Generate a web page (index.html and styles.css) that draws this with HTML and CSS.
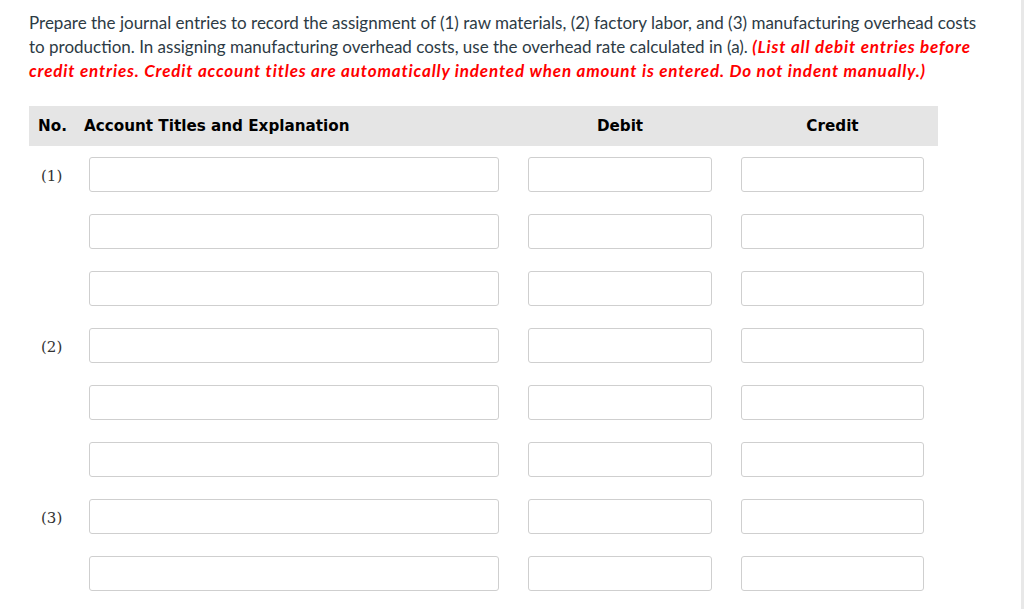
FILE: index.html
```html
<!DOCTYPE html>
<html lang="en">
<head>
<meta charset="utf-8">
<title>Journal entries</title>
<link rel="stylesheet" href="styles.css">
</head>
<body>
<div class="page">
  <p class="prompt">Prepare the journal entries to record the assignment of (1) raw materials, (2) factory labor, and (3) manufacturing overhead costs to production. In assigning manufacturing overhead costs, use the overhead rate calculated in (a). <em class="note">(List all debit entries before credit entries. Credit account titles are automatically indented when amount is entered. Do not indent manually.)</em></p>

  <div class="journal">
    <div class="row head">
      <div class="th th-no">No.</div>
      <div class="th th-account">Account Titles and Explanation</div>
      <div class="th th-amt">Debit</div>
      <div class="th th-amt">Credit</div>
    </div>

    <div class="row">
      <div class="no">(1)</div>
      <input class="field" type="text">
      <input class="field" type="text">
      <input class="field" type="text">
    </div>
    <div class="row">
      <div class="no"></div>
      <input class="field" type="text">
      <input class="field" type="text">
      <input class="field" type="text">
    </div>
    <div class="row">
      <div class="no"></div>
      <input class="field" type="text">
      <input class="field" type="text">
      <input class="field" type="text">
    </div>
    <div class="row">
      <div class="no">(2)</div>
      <input class="field" type="text">
      <input class="field" type="text">
      <input class="field" type="text">
    </div>
    <div class="row">
      <div class="no"></div>
      <input class="field" type="text">
      <input class="field" type="text">
      <input class="field" type="text">
    </div>
    <div class="row">
      <div class="no"></div>
      <input class="field" type="text">
      <input class="field" type="text">
      <input class="field" type="text">
    </div>
    <div class="row">
      <div class="no">(3)</div>
      <input class="field" type="text">
      <input class="field" type="text">
      <input class="field" type="text">
    </div>
    <div class="row">
      <div class="no"></div>
      <input class="field" type="text">
      <input class="field" type="text">
      <input class="field" type="text">
    </div>
  </div>
</div>
</body>
</html>
```

FILE: styles.css
```css
html, body {
  margin: 0;
  padding: 0;
  height: 100%;
  background: #ffffff;
  overflow: hidden;
}

.page {
  box-sizing: border-box;
  width: 1024px;
  min-height: 100%;
  padding: 11px 0 0 29px;
  border-right: 3px solid #e8e8e8;
}

.prompt {
  margin: 0;
  width: 955px;
  font-family: Lato, "Liberation Sans", sans-serif;
  font-size: 17px;
  line-height: 24px;
  color: #2d3b45;
}

.note {
  font-style: italic;
  font-weight: bold;
  color: #ff0000;
  letter-spacing: 0.84px;
}

.journal {
  margin-top: 23px;
  width: 909px;
}

.row {
  display: grid;
  grid-template-columns: 31px 410px 184px 183px;
  column-gap: 29px;
  align-items: center;
  height: 35px;
  margin-bottom: 22px;
}

.row.head {
  height: 40px;
  margin-bottom: 11px;
  background: #e5e5e5;
}

.th {
  font-family: "DejaVu Sans", Verdana, sans-serif;
  font-weight: bold;
  font-size: 15.2px;
  color: #000;
  white-space: nowrap;
}

.th-no {
  padding-left: 9px;
}

.th-account {
  margin-left: -5px;
}

.th-amt {
  text-align: center;
}

.no {
  padding: 3px 0 0 12px;
  font-family: "DejaVu Serif", Georgia, serif;
  font-size: 15px;
  color: #333;
  white-space: nowrap;
}

.field {
  box-sizing: border-box;
  width: 100%;
  height: 35px;
  margin: 0;
  padding: 0 6px;
  border: 1px solid #cfcfcf;
  border-radius: 3px;
  background: #fff;
  font-size: 14px;
}
```
